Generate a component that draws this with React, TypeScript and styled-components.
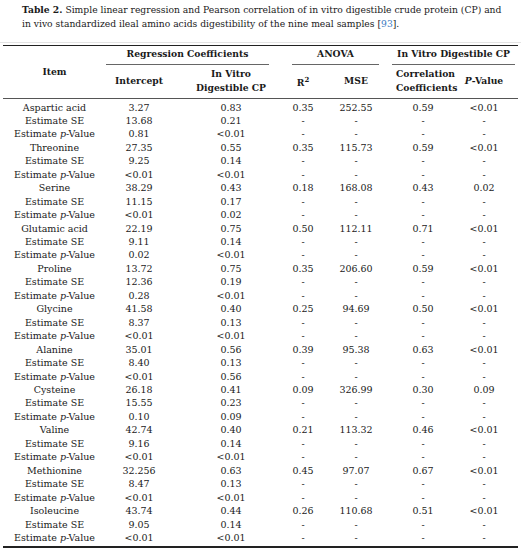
import React from 'react'
import styled, { createGlobalStyle } from 'styled-components'

type Amino = {
  name: string
  intercept: [string, string, string]
  ivd: [string, string, string]
  r2: string
  mse: string
  corr: string
  p: string
}

const ROWS: Amino[] = [
  { name: 'Aspartic acid', intercept: ['3.27', '13.68', '0.81'], ivd: ['0.83', '0.21', '<0.01'], r2: '0.35', mse: '252.55', corr: '0.59', p: '<0.01' },
  { name: 'Threonine', intercept: ['27.35', '9.25', '<0.01'], ivd: ['0.55', '0.14', '<0.01'], r2: '0.35', mse: '115.73', corr: '0.59', p: '<0.01' },
  { name: 'Serine', intercept: ['38.29', '11.15', '<0.01'], ivd: ['0.43', '0.17', '0.02'], r2: '0.18', mse: '168.08', corr: '0.43', p: '0.02' },
  { name: 'Glutamic acid', intercept: ['22.19', '9.11', '0.02'], ivd: ['0.75', '0.14', '<0.01'], r2: '0.50', mse: '112.11', corr: '0.71', p: '<0.01' },
  { name: 'Proline', intercept: ['13.72', '12.36', '0.28'], ivd: ['0.75', '0.19', '<0.01'], r2: '0.35', mse: '206.60', corr: '0.59', p: '<0.01' },
  { name: 'Glycine', intercept: ['41.58', '8.37', '<0.01'], ivd: ['0.40', '0.13', '<0.01'], r2: '0.25', mse: '94.69', corr: '0.50', p: '<0.01' },
  { name: 'Alanine', intercept: ['35.01', '8.40', '<0.01'], ivd: ['0.56', '0.13', '0.56'], r2: '0.39', mse: '95.38', corr: '0.63', p: '<0.01' },
  { name: 'Cysteine', intercept: ['26.18', '15.55', '0.10'], ivd: ['0.41', '0.23', '0.09'], r2: '0.09', mse: '326.99', corr: '0.30', p: '0.09' },
  { name: 'Valine', intercept: ['42.74', '9.16', '<0.01'], ivd: ['0.40', '0.14', '<0.01'], r2: '0.21', mse: '113.32', corr: '0.46', p: '<0.01' },
  { name: 'Methionine', intercept: ['32.256', '8.47', '<0.01'], ivd: ['0.63', '0.13', '<0.01'], r2: '0.45', mse: '97.07', corr: '0.67', p: '<0.01' },
  { name: 'Isoleucine', intercept: ['43.74', '9.05', '<0.01'], ivd: ['0.44', '0.14', '<0.01'], r2: '0.26', mse: '110.68', corr: '0.51', p: '<0.01' },
]

const GlobalStyle = createGlobalStyle`
  body {
    margin: 0;
    background: #ffffff;
    color: #1a1a1a;
    font-family: 'DejaVu Serif', 'Liberation Serif', serif;
  }
`

const Page = styled.div`
  width: 521px;
  padding-top: 3px;
`

const Caption = styled.p`
  margin: 0;
  padding: 0 0 0 22px;
  font-size: 9.2px;
  line-height: 14px;
  height: 39px;
  white-space: nowrap;
  border-bottom: 1px solid #e4e4e4;
`

const Ref = styled.span`
  color: #3a78c0;
`

const Table = styled.table`
  margin: 2px 0 0 3px;
  width: 515px;
  table-layout: fixed;
  border-collapse: collapse;
  font-size: 9.5px;
  border-top: 1.5px solid #222;
  border-bottom: 2px solid #222;
`

const HeadRow = styled.tr<{ $h: number }>`
  height: ${(p) => p.$h}px;
`

const Th = styled.th<{ $rule?: boolean }>`
  padding: 0;
  font-weight: bold;
  font-size: 9.2px;
  text-align: center;
  vertical-align: middle;
  white-space: nowrap;
  line-height: 14px;
  border-bottom: ${(p) => (p.$rule ? '1.5px solid #555' : 'none')};
`

const GroupLabel = styled.div<{ $ml: number; $mr: number }>`
  margin: 0 ${(p) => p.$mr}px 0 ${(p) => p.$ml}px;
  padding: 1px 0 3px;
  border-bottom: 1px solid #666;
`

const Row = styled.tr<{ $first?: boolean; $last?: boolean }>`
  height: 13.45px;
  & > td {
    padding-top: ${(p) => (p.$first ? 2 : 0)}px;
    padding-bottom: ${(p) => (p.$last ? 2 : 0)}px;
  }
`

const Td = styled.td`
  padding: 0;
  text-align: center;
  line-height: 13.45px;
  white-space: nowrap;
`

const Dash = () => <Td>-</Td>

const EstLabel = ({ kind }: { kind: 'se' | 'p' }) =>
  kind === 'se' ? (
    <>Estimate SE</>
  ) : (
    <>
      Estimate <i>p</i>-Value
    </>
  )

export default function App() {
  const last = ROWS.length - 1
  return (
    <Page>
      <GlobalStyle />
      <Caption>
        <b>Table 2.</b> Simple linear regression and Pearson correlation of in vitro digestible crude protein (CP) and
        <br />
        in vivo standardized ileal amino acids digestibility of the nine meal samples [<Ref>93</Ref>].
      </Caption>
      <Table>
        <colgroup>
          <col style={{ width: 103 }} />
          <col style={{ width: 66 }} />
          <col style={{ width: 118 }} />
          <col style={{ width: 26 }} />
          <col style={{ width: 80 }} />
          <col style={{ width: 54 }} />
          <col style={{ width: 68 }} />
        </colgroup>
        <thead>
          <HeadRow $h={19}>
            <Th rowSpan={2} $rule>
              Item
            </Th>
            <Th colSpan={2}>
              <GroupLabel $ml={0} $mr={21}>Regression Coefficients</GroupLabel>
            </Th>
            <Th colSpan={2}>
              <GroupLabel $ml={2} $mr={17}>ANOVA</GroupLabel>
            </Th>
            <Th colSpan={2}>
              <GroupLabel $ml={-4} $mr={3}>In Vitro Digestible CP</GroupLabel>
            </Th>
          </HeadRow>
          <HeadRow $h={33}>
            <Th $rule>Intercept</Th>
            <Th $rule>
              In Vitro
              <br />
              Digestible CP
            </Th>
            <Th $rule>
              R<sup style={{ fontSize: 7, verticalAlign: 4 }}>2</sup>
            </Th>
            <Th $rule>MSE</Th>
            <Th $rule>
              Correlation
              <br />
              Coefficients
            </Th>
            <Th $rule>
              <i>P</i>-Value
            </Th>
          </HeadRow>
        </thead>
        <tbody>
          {ROWS.map((r, i) => (
            <React.Fragment key={r.name}>
              <Row $first={i === 0}>
                <Td>{r.name}</Td>
                <Td>{r.intercept[0]}</Td>
                <Td>{r.ivd[0]}</Td>
                <Td>{r.r2}</Td>
                <Td>{r.mse}</Td>
                <Td>{r.corr}</Td>
                <Td>{r.p}</Td>
              </Row>
              <Row>
                <Td>
                  <EstLabel kind="se" />
                </Td>
                <Td>{r.intercept[1]}</Td>
                <Td>{r.ivd[1]}</Td>
                <Dash />
                <Dash />
                <Dash />
                <Dash />
              </Row>
              <Row $last={i === last}>
                <Td>
                  <EstLabel kind="p" />
                </Td>
                <Td>{r.intercept[2]}</Td>
                <Td>{r.ivd[2]}</Td>
                <Dash />
                <Dash />
                <Dash />
                <Dash />
              </Row>
            </React.Fragment>
          ))}
        </tbody>
      </Table>
    </Page>
  )
}
